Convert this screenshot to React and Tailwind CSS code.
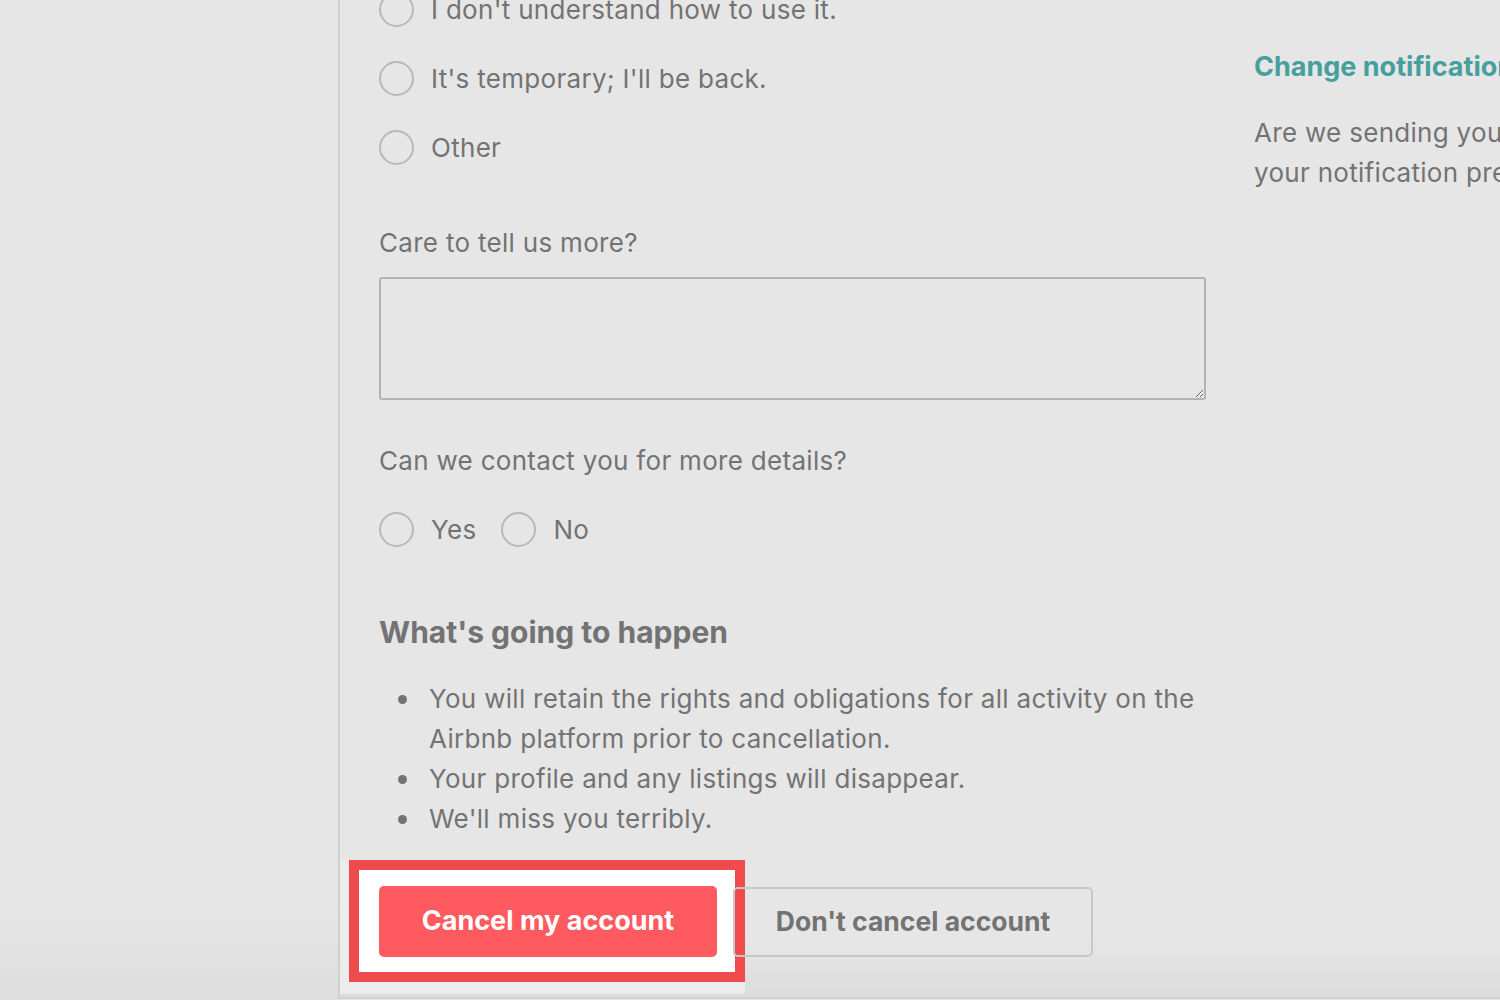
import React from 'react';

const font = { fontFamily: 'Inter, "Noto Sans", sans-serif' };

function Radio({ label }) {
  return (
    <label className="flex items-center gap-[17px] h-[35px]">
      <span className="w-[35px] h-[35px] rounded-full border-2 border-[#b8b8b8] shrink-0" />
      <span>{label}</span>
    </label>
  );
}

const reasons = ["I don't understand how to use it.", "It's temporary; I'll be back.", 'Other'];

const happen = [
  'You will retain the rights and obligations for all activity on the Airbnb platform prior to cancellation.',
  'Your profile and any listings will disappear.',
  "We'll miss you terribly."
];

export default function App() {
  return (
    <div className="w-[1500px] h-[1000px] overflow-hidden bg-[#e6e6e6] text-[#737373] text-[26px] tracking-[0.3px] flex" style={font}>
      <div className="w-[338px] shrink-0 bg-gradient-to-b from-[#e6e6e6] from-90% to-[#dedede]" />

      <div className="flex-1 h-[999px] flex border-l-2 border-b-2 border-[#d0d0d0] bg-gradient-to-b from-[#e6e6e6] from-94% to-[#dcdcdc]">
        {/* main form panel */}
        <div className="w-[898px] shrink-0 pl-[39px]">
          <div className="w-[827px] mt-[-8px]">
            <div className="flex flex-col gap-[34px]">
              {reasons.map((r) => (
                <Radio key={r} label={r} />
              ))}
            </div>

            <p className="mt-[58px] leading-[40px]">Care to tell us more?</p>
            <textarea className="mt-[14px] block w-[827px] h-[123px] border-2 border-[#b3b3b3] rounded-[3px] bg-transparent" />

            <p className="mt-[41px] leading-[40px]">Can we contact you for more details?</p>
            <div className="mt-[31px] flex gap-[25px]">
              <Radio label="Yes" />
              <Radio label="No" />
            </div>

            <h2 className="mt-[65px] text-[30px] font-bold leading-[40px] tracking-normal">What's going to happen</h2>
            <ul className="mt-[27px] leading-[40px]">
              {happen.map((t) => (
                <li key={t} className="flex">
                  <span className="w-[50px] shrink-0 pl-[19px] h-[40px] flex items-center">
                    <span className="w-[9px] h-[9px] rounded-full bg-[#737373]" />
                  </span>
                  <span className="w-[790px]">{t}</span>
                </li>
              ))}
            </ul>

            <div className="mt-[21px] flex items-start tracking-normal">
              <div className="ml-[-39px] pl-[9px] pb-[12px] bg-[#ececec]">
                <div className="border-[10px] border-[#ef4a4c] bg-white pt-[16px] pb-[15px] pl-[20px] pr-[18px]">
                  <button className="w-[338px] h-[71px] rounded-[5px] bg-[#ff5a5f] text-white font-bold text-[27px]">
                    Cancel my account
                  </button>
                </div>
              </div>
              <button className="ml-[-12px] mt-[27px] w-[360px] h-[70px] rounded-[5px] border-2 border-[#c8c8c8] font-bold text-[26.5px] text-[#737373]">
                Don't cancel account
              </button>
            </div>
          </div>
        </div>

        {/* side column */}
        <div className="pl-[16px] pt-[47px] whitespace-nowrap">
          <p className="text-[#45a09d] font-bold text-[27px] leading-[40px] tracking-normal">Change notification settings</p>
          <p className="mt-[26px] leading-[40px]">Are we sending you too many emails? Update</p>
          <p className="leading-[40px]">your notification preferences.</p>
        </div>
      </div>
    </div>
  );
}
